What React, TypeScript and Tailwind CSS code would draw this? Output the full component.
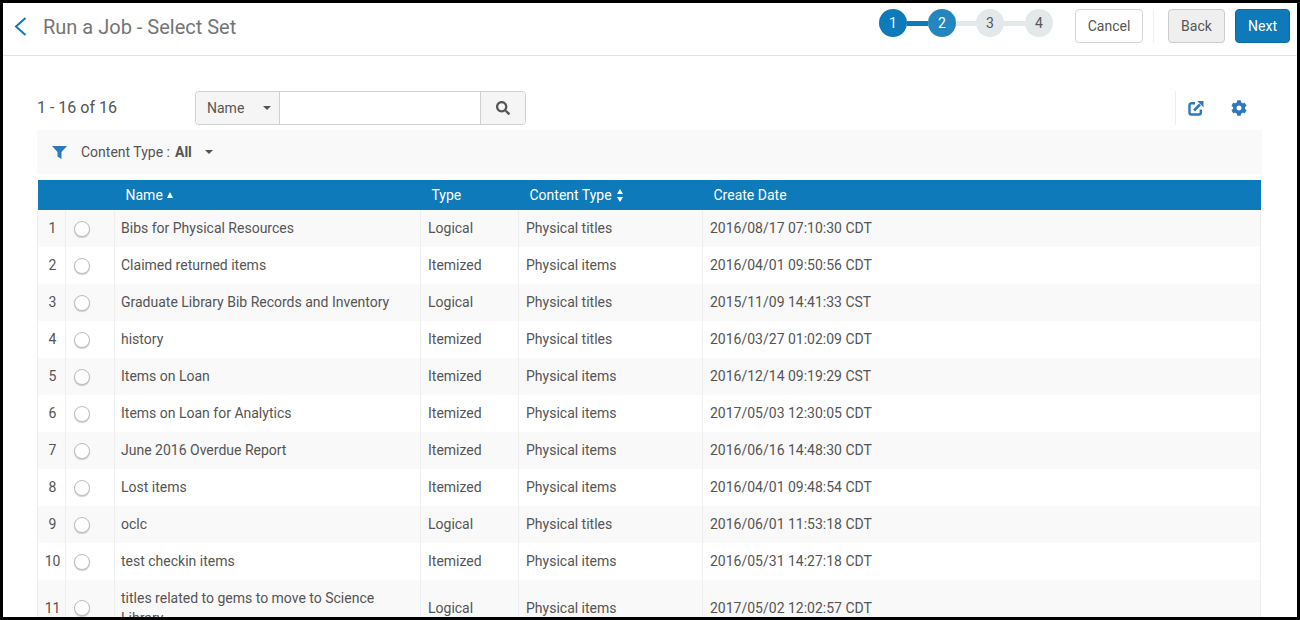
import React from 'react';
import { FaCog, FaSearch } from 'react-icons/fa';

const rows = [
  ['Bibs for Physical Resources', 'Logical', 'Physical titles', '2016/08/17 07:10:30 CDT'],
  ['Claimed returned items', 'Itemized', 'Physical items', '2016/04/01 09:50:56 CDT'],
  ['Graduate Library Bib Records and Inventory', 'Logical', 'Physical titles', '2015/11/09 14:41:33 CST'],
  ['history', 'Itemized', 'Physical titles', '2016/03/27 01:02:09 CDT'],
  ['Items on Loan', 'Itemized', 'Physical items', '2016/12/14 09:19:29 CST'],
  ['Items on Loan for Analytics', 'Itemized', 'Physical items', '2017/05/03 12:30:05 CDT'],
  ['June 2016 Overdue Report', 'Itemized', 'Physical items', '2016/06/16 14:48:30 CDT'],
  ['Lost items', 'Itemized', 'Physical items', '2016/04/01 09:48:54 CDT'],
  ['oclc', 'Logical', 'Physical titles', '2016/06/01 11:53:18 CDT'],
  ['test checkin items', 'Itemized', 'Physical items', '2016/05/31 14:27:18 CDT'],
  ['titles related to gems to move to Science Library', 'Logical', 'Physical items', '2017/05/02 12:02:57 CDT'],
];

function Caret() {
  return <span className="inline-block w-0 h-0 border-x-[4px] border-x-transparent border-t-[4px] border-t-[#555]" />;
}

function Step({ n, fill }: { n: number; fill: string }) {
  return (
    <div className={`w-[28px] h-[28px] rounded-full flex items-center justify-center text-[14px] ${fill}`}>
      {n}
    </div>
  );
}

function Header() {
  return (
    <div className="h-[53px] border-b border-[#e2e2e2] flex items-start">
      <svg viewBox="0 0 13 19" className="ml-[11px] mt-[14px] w-[13px] h-[19px]" fill="none" stroke="#0e7ab9" strokeWidth="2">
        <path d="M11.5 1 2 9.5 11.5 18" />
      </svg>
      <h1 className="ml-[16px] mt-[9px] text-[20px] leading-[30px] text-[#757575]">Run a Job - Select Set</h1>
      <div className="ml-auto flex items-start mt-[6px]">
        <div className="flex items-center">
          <Step n={1} fill="bg-[#0e7ab9] text-white" />
          <div className="w-[21px] h-[5px] bg-[#0e7ab9]" />
          <Step n={2} fill="bg-[#2486bf] text-white" />
          <div className="w-[20px] h-[5px] bg-[#e3e8eb]" />
          <Step n={3} fill="bg-[#e3e8eb] text-[#555]" />
          <div className="w-[21px] h-[5px] bg-[#e3e8eb]" />
          <Step n={4} fill="bg-[#e3e8eb] text-[#555]" />
        </div>
        <button className="ml-[22px] w-[68px] h-[34px] rounded-[4px] border border-[#d4d4d4] bg-white text-[14px] text-[#555]">
          Cancel
        </button>
        <div className="ml-[10px] w-px h-[34px] bg-[#eeeeee]" />
        <button className="ml-[14px] w-[57px] h-[34px] rounded-[4px] border border-[#cccccc] bg-[#efefef] text-[14px] text-[#555]">
          Back
        </button>
        <button className="ml-[10px] mr-[7px] w-[55px] h-[34px] rounded-[4px] border border-[#0c6aa2] bg-[#0e7ab9] text-[14px] text-white">
          Next
        </button>
      </div>
    </div>
  );
}

function Toolbar() {
  return (
    <div className="flex items-center h-[34px] mt-[35px]">
      <div className="w-[158px] text-[16px] text-[#555]">1 - 16 of 16</div>
      <div className="flex h-[34px] w-[331px] rounded-[4px] border border-[#cfcfcf] overflow-hidden">
        <div className="w-[84px] bg-[#f5f5f5] border-r border-[#cfcfcf] flex items-center pl-[11px] text-[14px] text-[#555]">
          <span>Name</span>
          <span className="ml-[19px] flex"><Caret /></span>
        </div>
        <div className="flex-1 bg-white" />
        <div className="w-[45px] bg-[#f5f5f5] border-l border-[#cfcfcf] flex items-center justify-center">
          <FaSearch className="text-[#555] w-[14px] h-[14px]" />
        </div>
      </div>
      <div className="ml-auto flex items-center h-[34px] border-l border-[#eeeeee]">
        <svg viewBox="0 0 16 16" className="ml-[12px] w-[16px] h-[16px]" fill="none" stroke="#2f78bd">
          <path d="M7 3.2H3.5a2 2 0 0 0-2 2v7.3a2 2 0 0 0 2 2h7.3a2 2 0 0 0 2-2V9.5" strokeWidth="2.4" />
          <path d="M6 10.5 12 4.5" strokeWidth="2.6" />
          <path d="M9.2 1h6.3v6.3z" fill="#2f78bd" stroke="none" />
        </svg>
        <FaCog className="ml-[27px] mr-[15px] w-[16px] h-[16px] text-[#2f78bd]" />
      </div>
    </div>
  );
}

function FilterBar() {
  return (
    <div className="mt-[5px] h-[44px] bg-[#f9f9f9] flex items-center text-[14px] text-[#555]">
      <svg viewBox="0 0 15 13" className="ml-[15px] w-[15px] h-[13px]" fill="#2f78bd">
        <path d="M0 0h15L9.5 6v7L5.5 10.5V6z" />
      </svg>
      <span className="ml-[14px]">Content Type :</span>
      <span className="ml-[5px] font-bold">All</span>
      <span className="ml-[13px] flex"><Caret /></span>
    </div>
  );
}

function SetsTable() {
  return (
    <table className="mt-[6px] w-[1224px] table-fixed border-collapse text-[14px] text-[#555]">
      <colgroup>
        <col className="w-[28px]" />
        <col className="w-[49px]" />
        <col className="w-[306px]" />
        <col className="w-[98px]" />
        <col className="w-[184px]" />
        <col />
      </colgroup>
      <thead>
        <tr className="h-[30px] bg-[#0e7ab9] text-white font-normal text-left">
          <th className="font-normal" />
          <th className="font-normal" />
          <th className="font-normal pl-[11px]">
            Name <span className="inline-block align-middle mb-[2px] ml-px w-0 h-0 border-x-[3.5px] border-x-transparent border-b-[6px] border-b-white" />
          </th>
          <th className="font-normal pl-[11px]">Type</th>
          <th className="font-normal pl-[11px]">
            <span className="flex items-center">
              Content Type
              <span className="ml-[5px] flex flex-col gap-[3px]">
                <span className="w-0 h-0 border-x-[3.5px] border-x-transparent border-b-[5px] border-b-white" />
                <span className="w-0 h-0 border-x-[3.5px] border-x-transparent border-t-[5px] border-t-white" />
              </span>
            </span>
          </th>
          <th className="font-normal pl-[11px]">Create Date</th>
        </tr>
      </thead>
      <tbody>
        {rows.map((r, i) => (
          <tr key={r[0]} className={i % 2 === 0 ? 'bg-[#f9f9f9]' : 'bg-white'}>
            <td className={`text-center pl-[2px] border-x border-[#eeeeee] ${i === 10 ? 'h-[56px]' : 'h-[37px]'}`}>{i + 1}</td>
            <td className="border-r border-[#eeeeee] pl-[8px]">
              <div className="w-[16px] h-[16px] rounded-full border border-[#bdbdbd] bg-white shadow-[0_1px_1px_rgba(0,0,0,0.2)]" />
            </td>
            <td className={`border-r border-[#eeeeee] pl-[6px] pr-[7px] ${i === 10 ? 'leading-[20px]' : ''}`}>{r[0]}</td>
            <td className="border-r border-[#eeeeee] pl-[7px]">{r[1]}</td>
            <td className="border-r border-[#eeeeee] pl-[7px]">{r[2]}</td>
            <td className="border-r border-[#eeeeee] pl-[7px]">{r[3]}</td>
          </tr>
        ))}
      </tbody>
    </table>
  );
}

export default function App() {
  return (
    <div className="w-[1300px] h-[620px] overflow-hidden border-[3px] border-black bg-white font-['Roboto',sans-serif]">
      <Header />
      <div className="pl-[34px] pr-[35px]">
        <Toolbar />
        <FilterBar />
        <SetsTable />
      </div>
    </div>
  );
}
